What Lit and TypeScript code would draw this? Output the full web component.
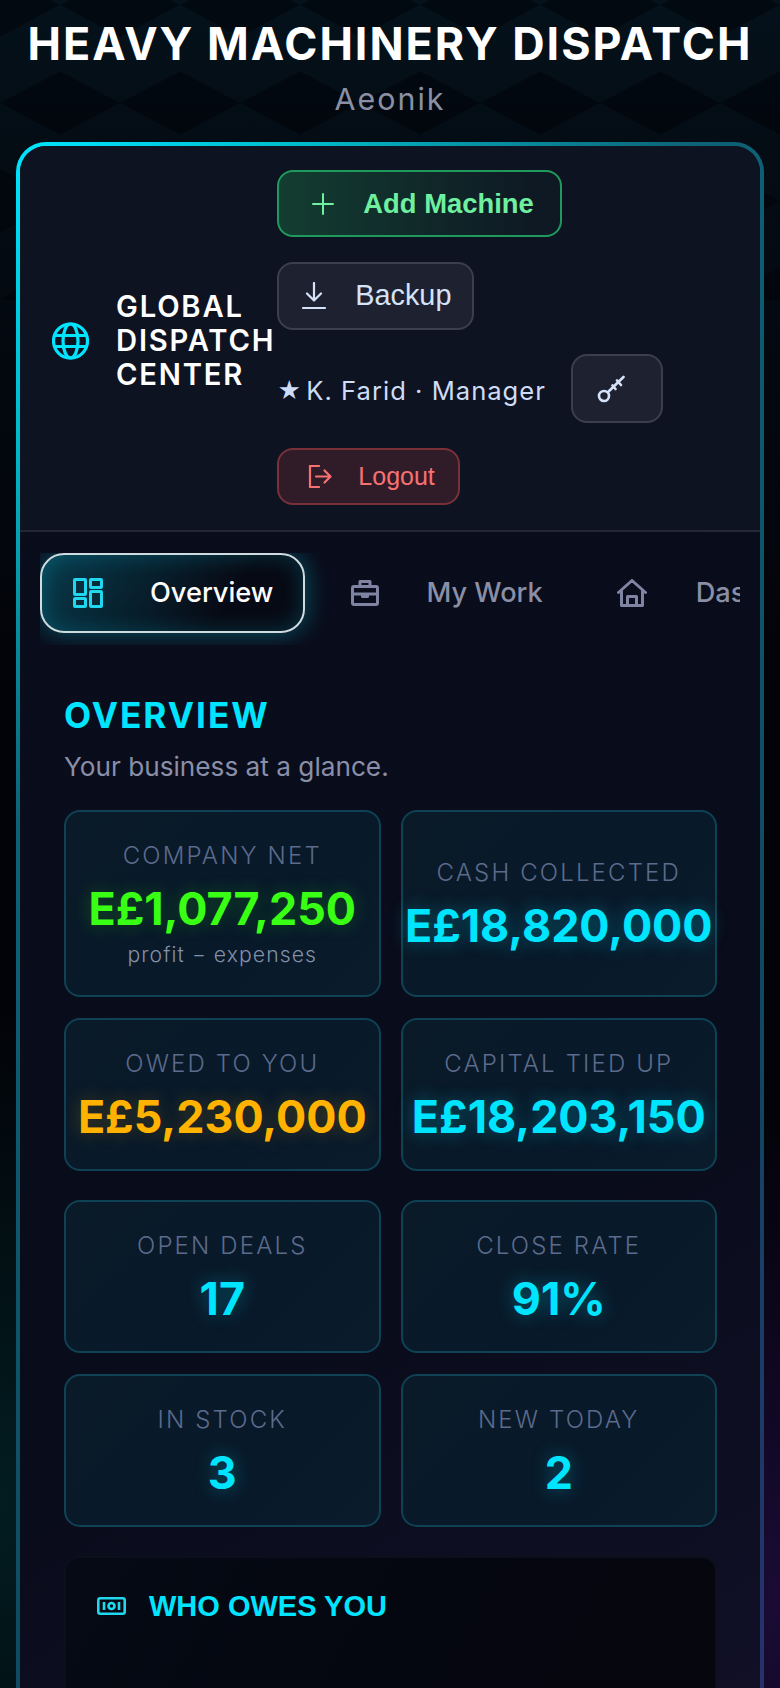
import { LitElement, html, css } from "lit";
import { customElement } from "lit/decorators.js";

@customElement("app-root")
export class AppRoot extends LitElement {
  static styles = css`
    :host {
      display: block;
      position: relative;
      height: 1688px;
      overflow: hidden;
      font-family: "Inter", "Noto Sans", sans-serif;
      background:
        radial-gradient(500px 700px at 0 1500px, rgba(0, 110, 110, 0.24), transparent 70%),
        radial-gradient(500px 700px at 780px 1600px, rgba(90, 30, 170, 0.28), transparent 70%),
        linear-gradient(180deg, #05121b 0, #040c14 150px, #020308 700px, #020308 100%);
      color: #fff;
    }
    * { box-sizing: border-box; }
    .pattern { position: absolute; left: 0; top: 0; width: 780px; height: 300px; }
    .page { position: relative; }
    .top { text-align: center; height: 142px; padding-top: 16px; }
    h1 {
      margin: 0;
      font-size: 44.8px;
      line-height: 56px;
      font-weight: 700;
      letter-spacing: 2px;
      white-space: nowrap;
      color: #fff;
    }
    .sub {
      margin-top: 6px;
      font-size: 30.4px;
      line-height: 42px;
      font-weight: 400;
      letter-spacing: 2px;
      color: #8b8fa3;
    }
    .shell {
      margin: 0 16px;
      border: 4px solid transparent;
      border-radius: 30px;
      background:
        linear-gradient(150deg, #0a0d1c 0, #090c1a 1100px, #121029 100%) padding-box,
        linear-gradient(135deg, #00e5ff 0, #00bccc 200px, #0e6276 480px, #0f4a60 1100px, #2b2c6c 100%) border-box;
      height: 1700px;
    }
    header {
      display: flex;
      align-items: center;
      gap: 2px;
      padding: 24px 0 25px 32px;
      border-bottom: 2px solid #222838;
      background: #0e1322;
      border-radius: 26px 26px 0 0;
    }
    .brand { display: flex; align-items: center; gap: 27px; flex: none; padding-top: 7px; }
    .brand svg { width: 37px; height: 38px; flex: none; }
    .bname {
      font-size: 29.2px;
      line-height: 34px;
      font-weight: 600;
      letter-spacing: 1.8px;
      white-space: nowrap;
    }
    .actions {
      display: flex;
      flex-wrap: wrap;
      align-items: center;
      gap: 24.5px 25px;
      width: 451px;
    }
    button {
      display: flex;
      align-items: center;
      font-family: "Liberation Sans", Arial, sans-serif;
      border-radius: 16px;
      border: 2px solid #3a3e4e;
      background: #1e2230;
      color: #d6e2f8;
      margin: 0;
    }
    .add {
      height: 67px;
      width: 285px;
      padding: 0 0 0 33px;
      gap: 29px;
      font-size: 27.4px;
      font-weight: 700;
      color: #6ef0a0;
      border-color: #1f9a5c;
      background: linear-gradient(90deg, rgba(34, 197, 94, 0.24), rgba(34, 197, 94, 0.03) 90%);
    }
    .backup {
      height: 68px;
      width: 197px;
      padding: 0 0 0 23px;
      gap: 29px;
      font-size: 28.8px;
    }
    .role {
      display: flex;
      align-items: center;
      margin-top: 5px;
      font-size: 25.6px;
      line-height: 36px;
      letter-spacing: 1px;
      color: #cfdcf6;
      white-space: nowrap;
    }
    .star { font-size: 23px; width: 29px; letter-spacing: 0; }
    .key { height: 69px; width: 92px; padding: 0 0 0 24px; }
    .logout {
      height: 57px;
      width: 183px;
      padding: 0 0 0 29px;
      gap: 26px;
      font-size: 25px;
      color: #f87171;
      border-color: #7a3038;
      background: #301c28;
    }
    .tabs {
      margin: 21px 20px 0;
      height: 92px;
      overflow: hidden;
      display: flex;
      gap: 13px;
      padding-bottom: 12px;
    }
    .tab {
      flex: none;
      display: flex;
      align-items: center;
      height: 80px;
      padding: 0 26px 0 31px;
      gap: 47px;
      border-radius: 24px;
      border: 2px solid transparent;
      font-size: 27.2px;
      font-weight: 500;
      color: #8a8fa6;
      white-space: nowrap;
    }
    .tab svg { flex: none; }
    .tab.on {
      padding-right: 30px;
      color: #fff;
      border-color: #cfdcdf;
      background: linear-gradient(125deg, rgba(0, 229, 255, 0.22), rgba(0, 0, 0, 0.25) 70%);
      box-shadow: 0 0 24px rgba(0, 229, 255, 0.35), inset 0 0 22px rgba(0, 229, 255, 0.2);
    }
    main { padding: 48px 43px 0 44px; }
    h2 {
      margin: 0;
      font-size: 35.2px;
      line-height: 44px;
      font-weight: 700;
      letter-spacing: 2px;
      color: #00e5ff;
    }
    .lead {
      margin: 11px 0 0;
      font-size: 26.2px;
      line-height: 38px;
      color: #8a8fa9;
    }
    .grid {
      display: grid;
      grid-template-columns: 1fr 1fr;
      gap: 21px 20px;
      margin-top: 24px;
    }
    .grid.second { margin-top: 29px; }
    .stat {
      display: flex;
      flex-direction: column;
      justify-content: center;
      align-items: center;
      text-align: center;
      border: 2px solid #0e4254;
      border-radius: 16px;
      background: linear-gradient(135deg, #0a1a28, #08192a 60%, #0a1b2c);
      padding: 25px 0 22px;
      white-space: nowrap;
    }
    .lbl {
      font-size: 24px;
      line-height: 38px;
      font-weight: 300;
      letter-spacing: 2.15px;
      color: #5c6a8c;
    }
    .val {
      margin-top: 4px;
      font-size: 44.8px;
      line-height: 60px;
      font-weight: 700;
      color: #00e5ff;
      text-shadow: 0 0 18px rgba(0, 229, 255, 0.35);
    }
    .val.green { color: #39ff14; text-shadow: 0 0 18px rgba(57, 255, 20, 0.25); }
    .val.amber { color: #ffb300; text-shadow: 0 0 18px rgba(255, 179, 0, 0.25); }
    .note {
      margin: -2px 0 2px;
      font-size: 21.2px;
      line-height: 34px;
      font-weight: 300;
      letter-spacing: 1.06px;
      color: #8490a8;
    }
    .owes {
      margin: 29px 0 0;
      height: 300px;
      border: 2px solid #0e0f1c;
      border-radius: 16px;
      background: linear-gradient(120deg, #050a14, #05060f 60%, #07060f);
      padding: 32px 0 0 31px;
      display: flex;
      align-items: flex-start;
      gap: 23px;
    }
    .owes svg { margin-top: 7px; flex: none; }
    .owes h3 {
      margin: 0;
      font-family: "Liberation Sans", Arial, sans-serif;
      font-size: 29px;
      line-height: 32px;
      font-weight: 700;
      color: #00e5ff;
    }
  `;

  stat(label: string, value: string, cls = "", note = "") {
    return html`<div class="stat">
      <div class="lbl">${label}</div>
      <div class="val ${cls}">${value}</div>
      ${note ? html`<div class="note">${note}</div>` : ""}
    </div>`;
  }

  render() {
    return html`
      <svg class="pattern" viewBox="0 0 780 300" aria-hidden="true">
        <defs>
          <pattern id="d" width="120" height="196" patternUnits="userSpaceOnUse" x="0" y="5">
            <path d="M60 66 L120 98 L60 130 L0 98Z" fill="#000208" fill-opacity=".5"/>
            <path d="M0 -32 L60 0 L0 32 L-60 0Z M120 -32 L180 0 L120 32 L60 0Z" fill="#000208" fill-opacity=".5"/>
            <path d="M0 164 L60 196 L0 228 L-60 196Z M120 164 L180 196 L120 228 L60 196Z" fill="#000208" fill-opacity=".5"/>
          </pattern>
        </defs>
        <rect width="780" height="300" fill="url(#d)"/>
      </svg>
      <div class="page">
        <div class="top">
          <h1>HEAVY MACHINERY DISPATCH</h1>
          <div class="sub">Aeonik</div>
        </div>
        <div class="shell">
          <header>
            <div class="brand">
              <svg viewBox="0 0 37 38" fill="none" stroke="#00e5ff" stroke-width="3.2">
                <circle cx="18.5" cy="19" r="17"/>
                <ellipse cx="18.5" cy="19" rx="7.5" ry="17"/>
                <path d="M3 13.5H34M3 24.5H34"/>
              </svg>
              <div class="bname">GLOBAL<br />DISPATCH<br />CENTER</div>
            </div>
            <div class="actions">
              <button class="add">
                <svg width="22" height="22" viewBox="0 0 22 22" fill="none" stroke="#6ef0a0" stroke-width="2" stroke-linecap="round"><path d="M11 1V21M1 11H21"/></svg>
                <span>Add Machine</span>
              </button>
              <button class="backup">
                <svg width="24" height="27" viewBox="0 0 24 27" fill="none" stroke="#d6e2f8" stroke-width="2.2" stroke-linecap="round" stroke-linejoin="round"><path d="M12 1V18M5 11.5L12 18.5L19 11.5M1 26H23"/></svg>
                <span>Backup</span>
              </button>
              <div class="role"><span class="star">★</span><span>K. Farid · Manager</span></div>
              <button class="key" aria-label="Change password">
                <svg width="28" height="28" viewBox="0 0 28 28" fill="none" stroke="#d6e2f8" stroke-width="2.6" stroke-linecap="round"><circle cx="7" cy="21" r="5"/><path d="M10.8 17.2L26.5 2M20 5.5L24 10M15.5 10.5L18.5 14"/></svg>
              </button>
              <button class="logout">
                <svg width="24" height="23" viewBox="0 0 24 23" fill="none" stroke="#f87171" stroke-width="2.2" stroke-linecap="round" stroke-linejoin="round"><path d="M11 1H2V22H11M8 11.5H22M16.5 5.5L22.5 11.5L16.5 17.5"/></svg>
                <span>Logout</span>
              </button>
            </div>
          </header>
          <nav class="tabs">
            <div class="tab on">
              <svg width="30" height="30" viewBox="0 0 30 30" fill="none" stroke="#1fd8ef" stroke-width="3" stroke-linejoin="round"><rect x="1.5" y="1.5" width="11" height="15" rx=".6"/><rect x="17.5" y="1.5" width="11" height="8" rx=".6"/><rect x="17.5" y="13.5" width="11" height="15" rx=".6"/><rect x="1.5" y="20.5" width="11" height="8" rx=".6"/></svg>
              <span>Overview</span>
            </div>
            <div class="tab">
              <svg width="28" height="26" viewBox="0 0 28 26" fill="none" stroke="#7f84a3" stroke-width="3" stroke-linejoin="round"><rect x="1.5" y="6.5" width="25" height="18" rx="1.5"/><path d="M9 6V1.5H19V6M1.5 14H26.5M11.5 14V16.5H16.5V14"/></svg>
              <span>My Work</span>
            </div>
            <div class="tab">
              <svg width="32" height="28" viewBox="0 0 32 28" fill="none" stroke="#7f84a3" stroke-width="3" stroke-linejoin="round" stroke-linecap="round"><path d="M1.5 13.5L15 1.5L28.5 13.5M4.5 11V26.5H25.5V11M10.5 26.5V17.5H19.5V26.5"/></svg>
              <span>Dashboard</span>
            </div>
          </nav>
          <main>
            <h2>OVERVIEW</h2>
            <p class="lead">Your business at a glance.</p>
            <div class="grid">
              ${this.stat("COMPANY NET", "E£1,077,250", "green", "profit − expenses")}
              ${this.stat("CASH COLLECTED", "E£18,820,000")}
              ${this.stat("OWED TO YOU", "E£5,230,000", "amber")}
              ${this.stat("CAPITAL TIED UP", "E£18,203,150")}
            </div>
            <div class="grid second">
              ${this.stat("OPEN DEALS", "17")}
              ${this.stat("CLOSE RATE", "91%")}
              ${this.stat("IN STOCK", "3")}
              ${this.stat("NEW TODAY", "2")}
            </div>
            <section class="owes">
              <svg width="29" height="18" viewBox="0 0 29 18" fill="none" stroke="#1fd8ef" stroke-width="2.6"><rect x="1.3" y="1.3" width="26.4" height="15.4" rx="2"/><circle cx="14.5" cy="9" r="3"/><path d="M7 5V13M22 5V13"/></svg>
              <h3>WHO OWES YOU</h3>
            </section>
          </main>
        </div>
      </div>
    `;
  }
}
